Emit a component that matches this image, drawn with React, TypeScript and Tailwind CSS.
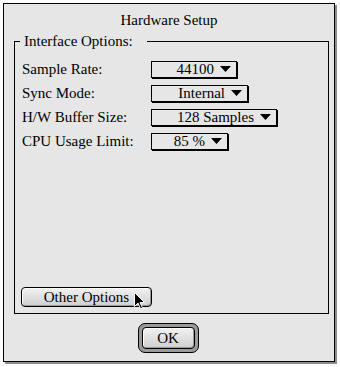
import type { ReactNode } from 'react';

const rows = [
  { label: 'Sample Rate:', value: '44100', width: 'w-[86px]' },
  { label: 'Sync Mode:', value: 'Internal', width: 'w-[97px]' },
  { label: 'H/W Buffer Size:', value: '128 Samples', width: 'w-[126px]' },
  { label: 'CPU Usage Limit:', value: '85 %', width: 'w-[77px]' },
];

function Triangle() {
  return (
    <svg width="11" height="6" viewBox="0 0 11 6" className="shrink-0">
      <path d="M0 0 H11 L5.5 6 Z" fill="#000" />
    </svg>
  );
}

function Popup({ value, width }: { value: string; width: string }) {
  return (
    <div
      className={`flex h-[17px] items-center justify-end gap-[6px] border border-black bg-[#e6e6e6] pr-[5px] shadow-[1px_1px_0_#000] ${width}`}
    >
      <span>{value}</span>
      <Triangle />
    </div>
  );
}

function Cursor() {
  return (
    <svg
      width="12"
      height="18"
      viewBox="0 0 12 18"
      className="absolute left-[113px] top-[5px]"
    >
      <path
        d="M0.5 0.5 V14.5 L4 11 L6.5 17 L8.5 16 L6 10.5 H10.5 Z"
        fill="#000"
        stroke="#fff"
        strokeWidth="1"
      />
    </svg>
  );
}

function Button({ children }: { children: ReactNode }) {
  return (
    <div className="flex h-[20px] w-[131px] items-center justify-center rounded-[4px] border border-black bg-gradient-to-b from-[#f2f2f2] to-[#cfcfcf] shadow-[inset_1px_1px_0_#fff,inset_-1px_-1px_0_#999]">
      {children}
    </div>
  );
}

export default function App() {
  return (
    <div
      className="h-[367px] w-[340px] bg-white pl-[3px] pt-[3px] text-[15px] leading-[16px] text-black"
      style={{ fontFamily: '"Liberation Serif", serif' }}
    >
      <div className="flex h-[359px] w-[332px] flex-col border border-black bg-[#e6e6e6] shadow-[2px_2px_0_#8c8c8c]">
        <div className="pt-[8px] text-center">Hardware Setup</div>

        {/* group box */}
        <div className="relative ml-[10px] mt-[13px] flex h-[273px] w-[315px] flex-col border border-black px-[7px] pb-[6px] pt-[15px]">
          <span className="absolute -top-[9px] left-[5px] bg-[#e6e6e6] pl-[4px] pr-[14px]">
            Interface Options:
          </span>

          <div className="flex flex-col">
            {rows.map((r) => (
              <div key={r.label} className="flex h-[24px] items-center">
                <span className="w-[129px]">{r.label}</span>
                <Popup value={r.value} width={r.width} />
              </div>
            ))}
          </div>

          <div className="relative mt-auto w-[131px] -ml-[1px]">
            <Button>Other Options</Button>
            <Cursor />
          </div>
        </div>

        <div className="mt-[9px] flex justify-center pr-[2px]">
          <div className="rounded-[7px] border border-black bg-[#9a9a9a] p-[3px]">
            <div className="flex h-[22px] w-[53px] items-center justify-center rounded-[4px] border border-black bg-gradient-to-b from-[#f2f2f2] to-[#cfcfcf] shadow-[inset_1px_1px_0_#fff,inset_-1px_-1px_0_#999]">
              OK
            </div>
          </div>
        </div>
      </div>
    </div>
  );
}
